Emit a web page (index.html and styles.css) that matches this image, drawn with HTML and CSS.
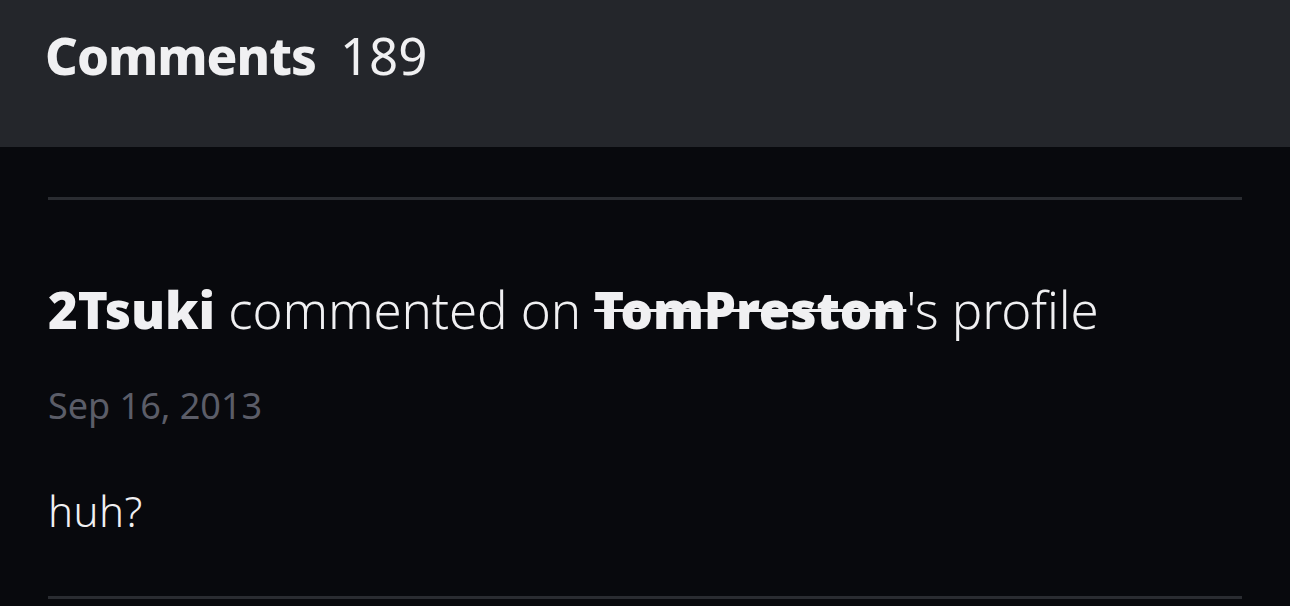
FILE: index.html
```html
<!DOCTYPE html>
<html>
<head>
<meta charset="utf-8">
<link rel="stylesheet" href="styles.css">
</head>
<body>
<header class="header">
  <h1 class="title"><span class="title-label">Comments</span><span class="title-count">189</span></h1>
</header>
<main class="list">
  <article class="comment">
    <p class="comment-head"><strong class="author">2Tsuki</strong> commented on <s class="target">TomPreston</s>'s profile</p>
    <p class="comment-date">Sep 16, 2013</p>
    <p class="comment-body">huh?</p>
  </article>
</main>
</body>
</html>
```
FILE: styles.css
```css
* { box-sizing: border-box; }
html, body { margin: 0; padding: 0; }
body {
  background: #08090d;
  color: #f0f0f2;
  font-family: "Noto Sans", "Open Sans", sans-serif;
  overflow: hidden;
}
.header {
  background: #24262b;
  height: 147px;
  padding: 30px 0 0 45px;
}
.title {
  margin: 0;
  font-size: 51px;
  line-height: 1;
  display: flex;
  gap: 24px;
}
.title-label { font-weight: 800; letter-spacing: -1px; }
.title-count { font-weight: 400; }
.list {
  padding: 50px 48px 0 48px;
}
.comment {
  border-top: 3px solid #2a2c31;
  border-bottom: 3px solid #2a2c31;
  padding: 84px 0 64px 0;
}
.comment p { margin: 0; }
.comment-head {
  font-size: 51px;
  line-height: 1;
  font-weight: 300;
  letter-spacing: -0.1px;
}
.author, .target { font-weight: 900; }
.target { text-decoration-thickness: 3px; }
.comment-date {
  margin-top: 53px !important;
  font-size: 36px;
  line-height: 1;
  color: #5b5d68;
}
.comment-body {
  margin-top: 66px !important;
  font-size: 42px;
  line-height: 1;
  font-weight: 300;
  letter-spacing: 0.5px;
}
```
